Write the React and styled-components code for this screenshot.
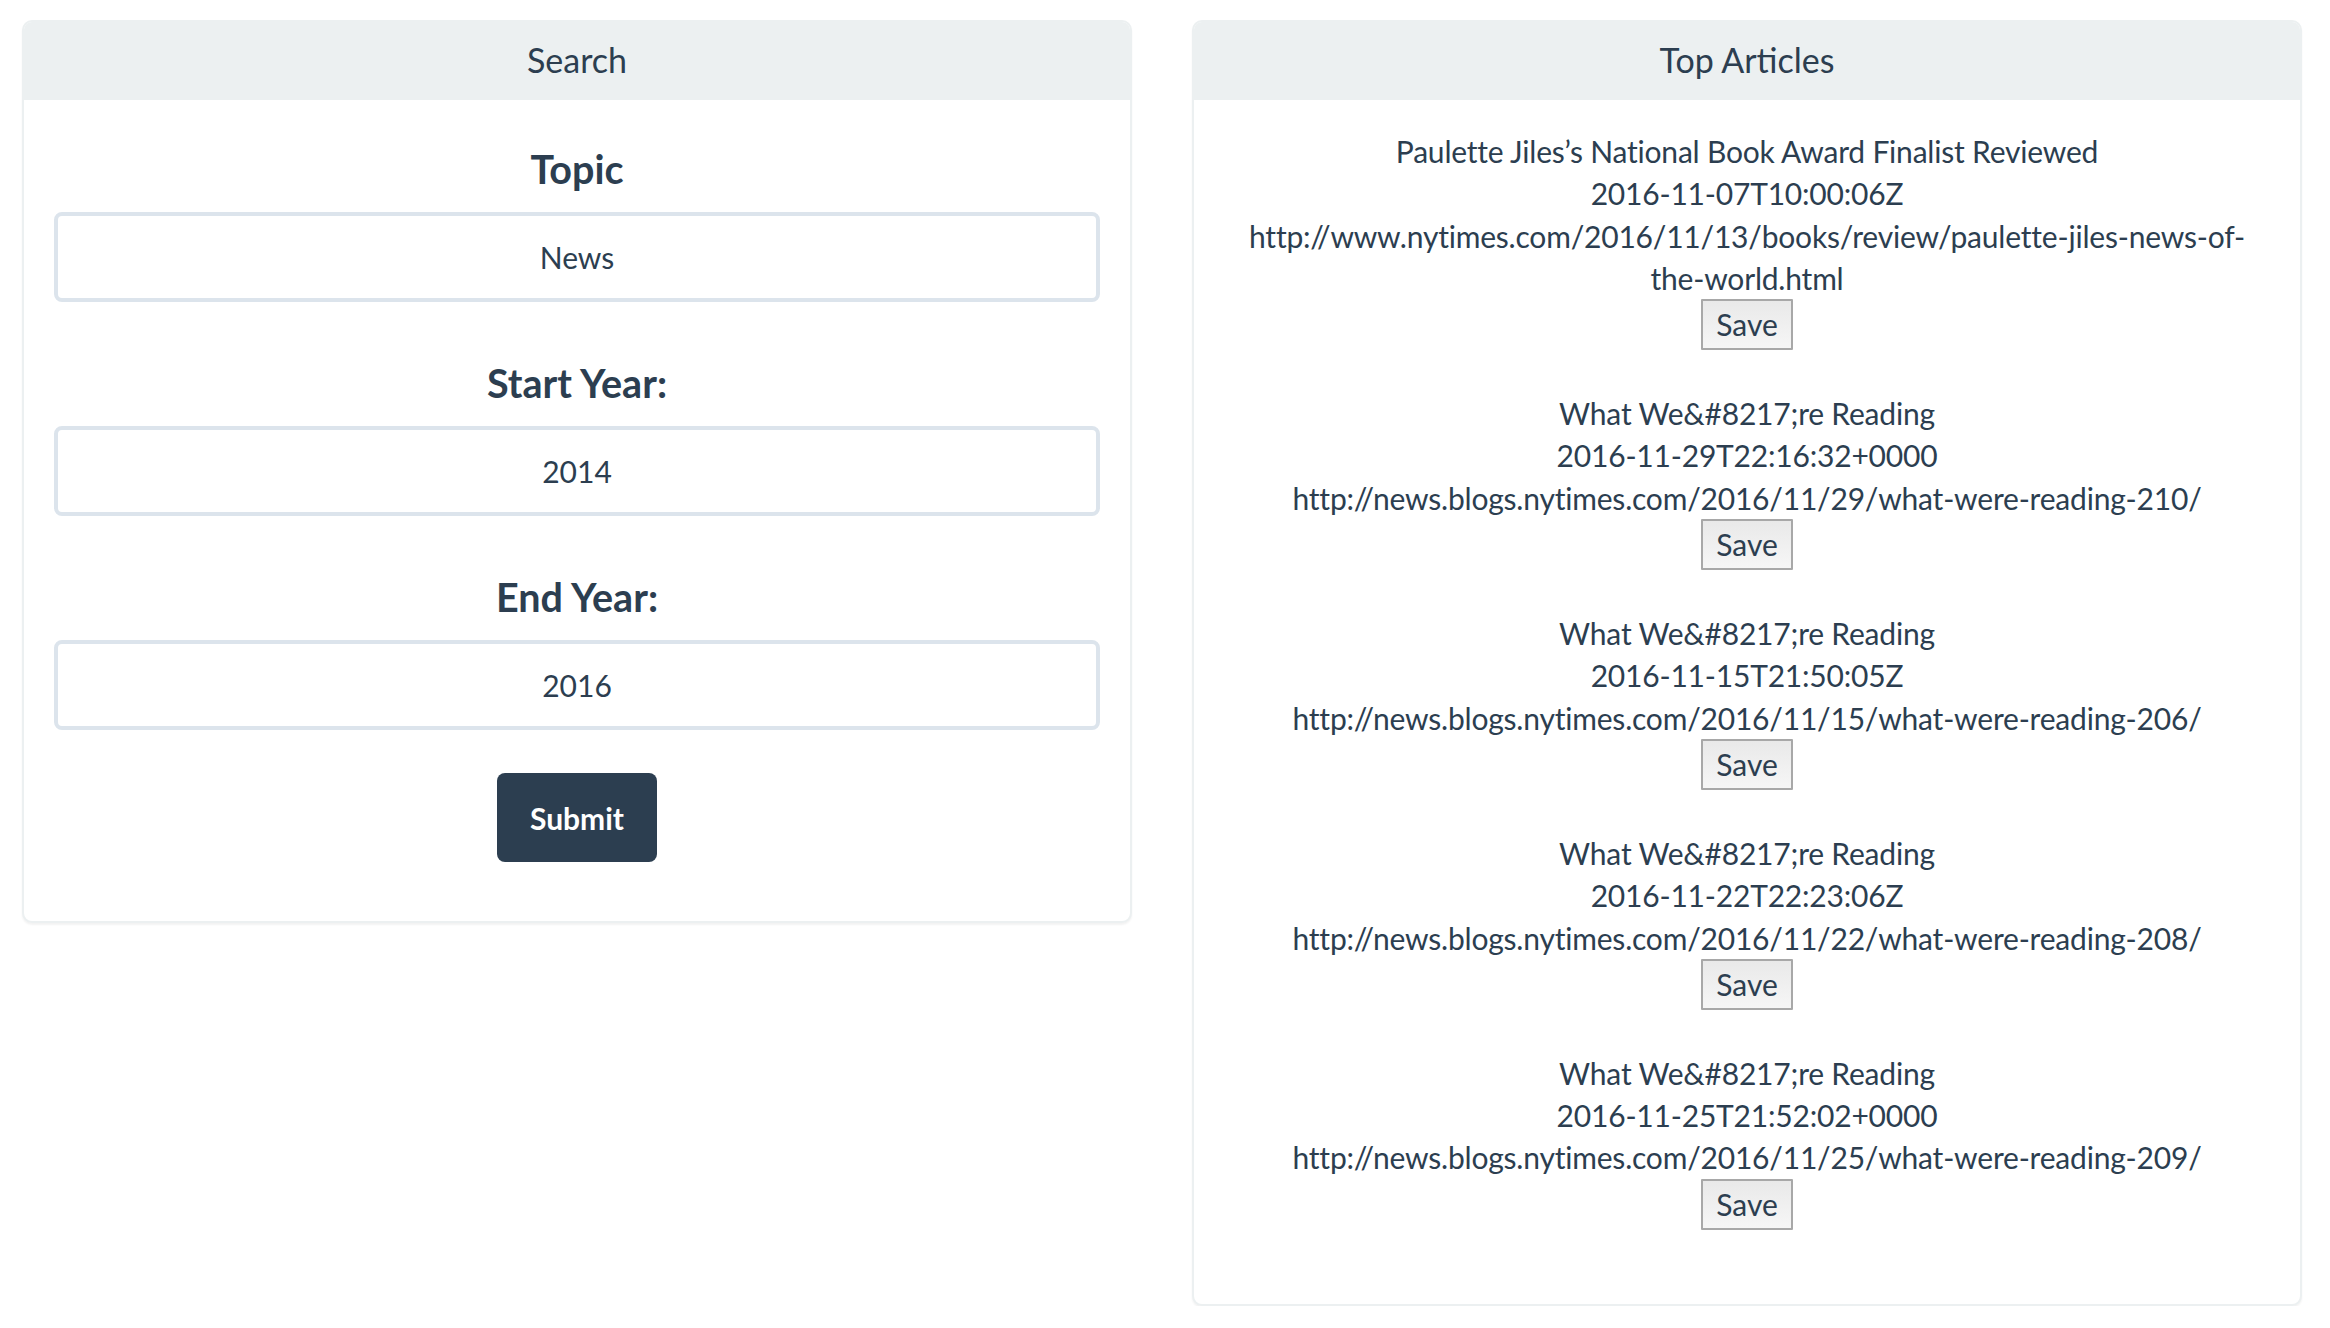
import React from "react";
import styled, { createGlobalStyle } from "styled-components";

const GlobalStyle = createGlobalStyle`
  html, body {
    margin: 0;
    padding: 0;
    background: #ffffff;
  }
  body {
    font-family: Lato, "Noto Sans", "Liberation Sans", sans-serif;
    color: #2c3e50;
    font-size: 30px;
    line-height: 1.41;
  }
  * {
    box-sizing: border-box;
  }
`;

const Page = styled.div`
  display: flex;
  align-items: flex-start;
  gap: 60px;
  padding: 20px 28px 0 22px;
`;

const Panel = styled.div`
  flex: 1;
  min-width: 0;
  background: #ffffff;
  border: 2px solid #ecf0f1;
  border-radius: 10px;
  box-shadow: 0 2px 2px rgba(0, 0, 0, 0.05);
  overflow: hidden;
`;

const PanelHeading = styled.div`
  background: #ecf0f1;
  padding: 20px 30px;
  border-bottom: 2px solid transparent;
  text-align: center;
  font-size: 34px;
  line-height: 36px;
`;

const SearchForm = styled.form`
  display: flex;
  flex-direction: column;
  align-items: stretch;
  padding: 48px 30px 59px;
`;

const FieldGroup = styled.div`
  display: flex;
  flex-direction: column;
  margin-bottom: ${(p) => (p.$last ? "43px" : "60px")};
`;

const FieldLabel = styled.label`
  display: block;
  text-align: center;
  font-size: 39.5px;
  font-weight: 700;
  line-height: 42px;
  margin-bottom: 22px;
`;

const TextInput = styled.input`
  display: block;
  width: 100%;
  height: 90px;
  padding: 20px 30px;
  border: 4px solid #dce4ec;
  border-radius: 8px;
  font-family: inherit;
  font-size: 30px;
  color: #2c3e50;
  text-align: center;
  background: #ffffff;
  outline: none;
`;

const SubmitButton = styled.button`
  align-self: center;
  height: 89px;
  padding: 0 33px;
  border: none;
  border-radius: 8px;
  background: #2c3e50;
  color: #ffffff;
  font-family: inherit;
  font-size: 30px;
  font-weight: 700;
  cursor: pointer;
`;

const ArticleList = styled.div`
  padding: 30px 30px 32px;
  text-align: center;
  letter-spacing: -0.2px;
`;

const Article = styled.div`
  margin-bottom: 42px;
`;

const ArticleLine = styled.div`
  word-wrap: break-word;
`;

const SaveButton = styled.button`
  display: block;
  margin: 0 auto;
  padding: 2px 13px;
  border: 2px solid #a8a8a8;
  border-radius: 1px;
  background: linear-gradient(#e9e9e9, #f6f6f6);
  color: #2c3e50;
  font-family: inherit;
  font-size: 30px;
  line-height: 43px;
  cursor: pointer;
`;

const articles = [
  {
    title: "Paulette Jiles\u2019s National Book Award Finalist Reviewed",
    date: "2016-11-07T10:00:06Z",
    url: "http://www.nytimes.com/2016/11/13/books/review/paulette-jiles-news-of-the-world.html",
  },
  {
    title: "What We&#8217;re Reading",
    date: "2016-11-29T22:16:32+0000",
    url: "http://news.blogs.nytimes.com/2016/11/29/what-were-reading-210/",
  },
  {
    title: "What We&#8217;re Reading",
    date: "2016-11-15T21:50:05Z",
    url: "http://news.blogs.nytimes.com/2016/11/15/what-were-reading-206/",
  },
  {
    title: "What We&#8217;re Reading",
    date: "2016-11-22T22:23:06Z",
    url: "http://news.blogs.nytimes.com/2016/11/22/what-were-reading-208/",
  },
  {
    title: "What We&#8217;re Reading",
    date: "2016-11-25T21:52:02+0000",
    url: "http://news.blogs.nytimes.com/2016/11/25/what-were-reading-209/",
  },
];

const fields = [
  { label: "Topic", value: "News" },
  { label: "Start Year:", value: "2014" },
  { label: "End Year:", value: "2016" },
];

export default function App() {
  return (
    <>
      <GlobalStyle />
      <Page>
        <Panel>
          <PanelHeading>Search</PanelHeading>
          <SearchForm onSubmit={(e) => e.preventDefault()}>
            {fields.map((f, i) => (
              <FieldGroup key={f.label} $last={i === fields.length - 1}>
                <FieldLabel>{f.label}</FieldLabel>
                <TextInput defaultValue={f.value} />
              </FieldGroup>
            ))}
            <SubmitButton type="submit">Submit</SubmitButton>
          </SearchForm>
        </Panel>
        <Panel>
          <PanelHeading>Top Articles</PanelHeading>
          <ArticleList>
            {articles.map((a, i) => (
              <Article key={i}>
                <ArticleLine>{a.title}</ArticleLine>
                <ArticleLine>{a.date}</ArticleLine>
                <ArticleLine>{a.url}</ArticleLine>
                <SaveButton>Save</SaveButton>
              </Article>
            ))}
          </ArticleList>
        </Panel>
      </Page>
    </>
  );
}
